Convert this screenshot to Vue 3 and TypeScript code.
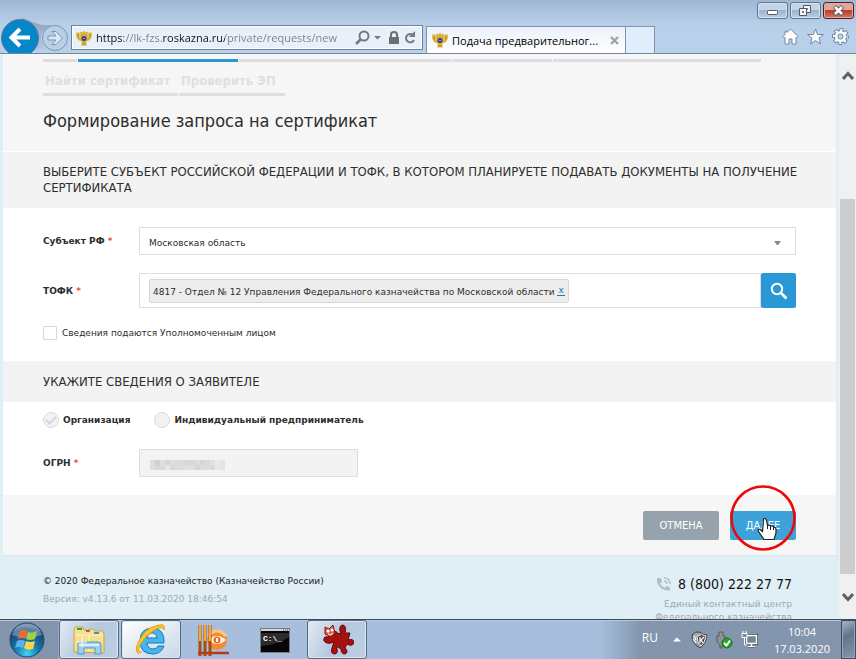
<script setup lang="ts">
import { ref } from 'vue'

interface NavTab { title: string; active?: boolean; width: string }

const primaryTabs: NavTab[] = [
  { title: '', width: 'w-first' },
  { title: 'Сформировать запрос', active: true, width: 'w-active' },
  { title: '', width: 'w-wide' },
  { title: '', width: 'w-short' },
  { title: '', width: 'w-last' },
]
const url = ref('https://lk-fzs.roskazna.ru/private/requests/new')
const region = ref('Московская область')
const authorized = ref(false)
const applicant = ref('org')
const department = ref('4817 - Отдел № 12 Управления Федерального казначейства по Московской области')
const maskShades = [
  ['#dcdcdc', '#d3d0d3', '#dededb', '#d6d4d6', '#dedee2', '#dcdcde', '#dadade', '#d9d7d9', '#d5d9dc', '#dcdcdc', '#d6d4d8', '#d9d9db', '#e2e2e6', '#e9ebea', '#e3e7eb'],
  ['#dddddd', '#d8d5d5', '#dadad7', '#e6e6e2', '#d6d9de', '#dadce0', '#dddce0', '#dfdfe1', '#dfdfdf', '#d7d7db', '#dcdce0', '#dddddf', '#d9dbdb', '#e6e9e6', '#e0e5ea'],
]
</script>

<template>
  <div class="desktop">
    <header class="chrome">
      <div class="nav-buttons">
        <svg width="70" height="54" viewBox="0 0 70 54" aria-hidden="true">
          <defs>
            <linearGradient id="swoosh" x1="0" x2="0" y1="0" y2="1">
              <stop offset="0" stop-color="#8ba1bc" /><stop offset="1" stop-color="#b2c9e3" />
            </linearGradient>
          </defs>
          <path d="M22 18C32 21 37 26 52 25L43 32C40 37 41 42 45 49L33 51Z" fill="url(#swoosh)" />
          <circle cx="20" cy="38" r="18.500" fill="#0487c8" stroke="#5c7791" />
          <path d="M30 37.500H12M20 29L11.500 37.500L20 46" fill="none" stroke="#fff" stroke-width="4" />
          <circle cx="55" cy="38" r="12.500" fill="#b9cfe8" stroke="#8197b1" />
          <path d="M48 36H56L52 31.500H56L62.500 38L56 44.500H52L56 40H48Z" fill="#d9e6f5" stroke="#7e94af" />
        </svg>
      </div>
      <div class="address">
        <svg class="emblem" width="16" height="16" viewBox="0 0 16 16" aria-hidden="true">
          <path d="M0.500 2L3 3L5 1.500L6.500 2.500L8 0.500L9.500 2.500L11 1.500L13 3L15.500 2L16 6L14 10L11 11L10 13L11 15.500H5L6 13L5 11L2 10L0 6Z" fill="#d9b23a" />
          <path d="M2.500 4V8M5 4.500V7M11 4.500V7M13.500 4V8M6 14H10" stroke="#b98d24" />
          <path d="M4 3V8M12 3V8" stroke="#f3dc80" /><circle cx="8" cy="8.500" r="2.500" fill="#353c91" /><path d="M7 8.500H9" stroke="#d98b77" />
        </svg>
        <input v-model="url" class="url" type="text" aria-label="Адрес" spellcheck="false">
        <svg width="64" height="18" viewBox="0 0 64 18" aria-hidden="true">
          <circle cx="10" cy="7" r="4.500" fill="none" stroke="#727981" stroke-width="2" /><path d="M6.500 10.500L2 15" stroke="#727981" stroke-width="2.500" />
          <path d="M20 7H27L23.500 10.500Z" fill="#727981" />
          <path d="M35 8H45V15H35Z" fill="#6d7073" /><path d="M37 8V5.500Q37 3 40 3T43 5.500V8" fill="none" stroke="#6d7073" stroke-width="2" />
          <path d="M59 6A4.200 4.200 0 1 0 60 11" fill="none" stroke="#727981" stroke-width="2" /><path d="M61 2V8H55Z" fill="#727981" />
        </svg>
      </div>
      <div class="tab">
        <svg class="emblem" width="16" height="16" viewBox="0 0 16 16" aria-hidden="true">
          <path d="M0.500 2L3 3L5 1.500L6.500 2.500L8 0.500L9.500 2.500L11 1.500L13 3L15.500 2L16 6L14 10L11 11L10 13L11 15.500H5L6 13L5 11L2 10L0 6Z" fill="#d9b23a" />
          <path d="M2.500 4V8M5 4.500V7M11 4.500V7M13.500 4V8M6 14H10" stroke="#b98d24" />
          <path d="M4 3V8M12 3V8" stroke="#f3dc80" /><circle cx="8" cy="8.500" r="2.500" fill="#353c91" /><path d="M7 8.500H9" stroke="#d98b77" />
        </svg>
        <span class="tab-title">Подача предварительног...</span>
        <button class="plain" type="button" aria-label="Закрыть вкладку">
          <svg width="9" height="9" viewBox="0 0 9 9"><path d="M1 1L8 8M8 1L1 8" stroke="#a3a3a3" stroke-width="2.400" /></svg>
        </button>
      </div>
      <button class="new-tab" type="button" aria-label="Новая вкладка"></button>
      <div class="window-side">
        <div class="window-buttons">
          <button class="win" type="button" aria-label="Свернуть">
            <svg width="29" height="15" viewBox="0 0 29 15"><rect x="9.500" y="7.500" width="10" height="4" rx="1" fill="#fff" stroke="#53586a" /></svg>
          </button>
          <button class="win" type="button" aria-label="Свернуть в окно">
            <svg width="29" height="15" viewBox="0 0 29 15"><path d="M12.500 2.500H19.500V9.500H12.500ZM15.500 5.500V6.500H16.500V5.500Z" fill="#f4f6f9" stroke="#53586a" /><path d="M8.500 5.500H15.500V12.500H8.500ZM11.500 8.500V9.500H12.500V8.500Z" fill="#f4f6f9" stroke="#53586a" /></svg>
          </button>
          <button class="win close" type="button" aria-label="Закрыть">
            <svg width="29" height="15" viewBox="0 0 29 15"><path d="M10.500 3.500L18.500 11.500M18.500 3.500L10.500 11.500" stroke="#555769" stroke-width="4.500" /><path d="M11 4L18 11M18 4L11 11" stroke="#fff" stroke-width="2.500" /></svg>
          </button>
        </div>
        <div class="tools">
          <button class="plain" type="button" aria-label="Домой">
            <svg width="17" height="17" viewBox="0 0 17 17"><path d="M8.500 1L16 8.500L14.500 10L14 9.500V16H10V11H7V16H3V9.500L2.500 10L1 8.500L3 6.500V3H5V4.500Z" fill="#fff" stroke="#7088a3" /></svg>
          </button>
          <button class="plain" type="button" aria-label="Избранное">
            <svg width="17" height="17" viewBox="0 0 17 17"><path d="M8.500 1L10.500 6.500H16.500L12 10L13.500 16L8.500 12.500L3.500 16L5 10L0.500 6.500H6.500Z" fill="#fff" stroke="#7088a3" /></svg>
          </button>
          <button class="plain" type="button" aria-label="Сервис">
            <svg width="17" height="17" viewBox="0 0 17 17"><circle cx="8.500" cy="8.500" r="4.500" fill="none" stroke="#7088a3" stroke-width="4.600" /><circle cx="8.500" cy="8.500" r="6.500" fill="none" stroke="#7088a3" stroke-width="4" stroke-dasharray="3.400 1.705" stroke-dashoffset="1.700" /><circle cx="8.500" cy="8.500" r="6" fill="none" stroke="#fff" stroke-width="3" stroke-dasharray="2 2.712" stroke-dashoffset="1" /><circle cx="8.500" cy="8.500" r="4.300" fill="none" stroke="#fff" stroke-width="2.600" /></svg>
          </button>
        </div>
      </div>
    </header>

    <div class="viewport">
      <div class="page">
        <main class="sheet">
          <nav class="menu">
            <div class="menu-row clipped">
              <a v-for="(item, i) in primaryTabs" :key="i" href="#" :class="['menu-item', item.width, { active: item.active }]">{{ item.title }}</a>
            </div>
            <div class="menu-row second">
              <a class="menu-item find" href="#">Найти сертификат</a>
              <a class="menu-item check" href="#">Проверить ЭП</a>
            </div>
          </nav>
          <h1>Формирование запроса на сертификат</h1>
          <form @submit.prevent>
            <h2>Выберите субъект Российской Федерации и ТОФК, в котором планируете подавать документы на получение сертификата</h2>
            <section class="fields">
              <div class="row">
                <label class="caption" for="region">Субъект РФ <span class="star">*</span></label>
                <div class="select-wrap">
                  <select id="region" v-model="region"><option>Московская область</option></select>
                  <svg class="caret" width="7" height="5" viewBox="0 0 7 5" aria-hidden="true"><path d="M0 0H7L4 4H3Z" fill="#888" /></svg>
                </div>
              </div>
              <div class="row">
                <label class="caption" for="tofk">ТОФК <span class="star">*</span></label>
                <div class="lookup">
                  <div class="lookup-field">
                    <span class="chip">{{ department }} <a class="remove" href="#" aria-label="Удалить">x</a></span>
                    <input id="tofk" class="lookup-input" type="text">
                  </div>
                  <button class="search" type="button" aria-label="Найти">
                    <svg width="18" height="18" viewBox="0 0 18 18"><circle cx="7" cy="7" r="5.200" fill="none" stroke="#fff" stroke-width="2" /><path d="M11 11L16.500 16.500" stroke="#fff" stroke-width="2.600" /></svg>
                  </button>
                </div>
              </div>
              <label class="agree"><input v-model="authorized" type="checkbox"> Сведения подаются Уполномоченным лицом</label>
            </section>
            <h2 class="single">Укажите сведения о заявителе</h2>
            <section class="fields applicant">
              <div class="radios">
                <label><input v-model="applicant" type="radio" name="applicant" value="org" disabled>Организация</label>
                <label><input v-model="applicant" type="radio" name="applicant" value="ip" disabled>Индивидуальный предприниматель</label>
              </div>
              <div class="row">
                <label class="caption" for="ogrn">ОГРН <span class="star">*</span></label>
                <div class="ogrn">
                  <input id="ogrn" type="text" disabled>
                  <svg class="mask" width="75" height="10" viewBox="0 0 75 10" shape-rendering="crispEdges" aria-hidden="true">
                    <g v-for="(line, y) in maskShades" :key="y">
                      <rect v-for="(shade, x) in line" :key="x" :x="x * 5" :y="y * 5" width="5" height="5" :fill="shade" />
                    </g>
                  </svg>
                </div>
              </div>
            </section>
            <div class="actions">
              <button class="action cancel" type="button">Отмена</button>
              <div class="next-wrap">
                <button class="action next" type="submit">Далее</button>
                <svg class="pointer" width="68" height="68" viewBox="0 0 68 68" aria-hidden="true">
                  <circle cx="34" cy="34" r="31.500" fill="none" stroke="#f00707" stroke-width="2.600" />
                  <path d="M34.500 36.500Q34 34.500 35.500 34.500Q37 34.500 37.500 36.500L38.500 41.500Q41 40.500 41.500 42Q44 41.500 44.500 43Q47 43 47 45.500V49L45 55.500H35L29.500 47.500Q28.500 44.500 31 45.500L33.500 47.500Z" fill="#fff" stroke="#222" stroke-width="1.200" />
                  <path d="M38.500 41V45M41.500 42V46M44.500 43V46" stroke="#222" />
                </svg>
              </div>
            </div>
          </form>
        </main>
        <footer class="footer">
          <div class="legal">
            <div>© 2020 Федеральное казначейство (Казначейство России)</div>
            <div class="muted">Версия: v4.13.6 от 11.03.2020 18:46:54</div>
          </div>
          <div class="contact">
            <div class="phone">
              <svg width="14" height="14" viewBox="0 0 14 14" aria-hidden="true"><path d="M0 1H4L5 5L3 6.500Q5 9.500 7.500 11L9 9L13 10V13.500Q6 14 2.500 9.500T0 1Z" fill="#b5bec5" /><path d="M7 1Q13 1 13 7M7 4Q10 4 10 7" fill="none" stroke="#b5bec5" stroke-width="1.500" /></svg>
              8 (800) 222 27 77
            </div>
            <div class="muted centre">Единый контактный центр<br>Федерального казначейства</div>
          </div>
        </footer>
      </div>
      <div class="scrollbar">
        <svg width="12" height="9" viewBox="0 0 12 9" aria-hidden="true"><path d="M1 8L6 2.500L11 8" fill="none" stroke="#606060" stroke-width="3" /></svg>
        <div class="track"><div class="thumb"></div></div>
        <svg width="12" height="9" viewBox="0 0 12 9" aria-hidden="true"><path d="M1 1L6 6.500L11 1" fill="none" stroke="#606060" stroke-width="3" /></svg>
      </div>
    </div>

    <div class="taskbar">
      <button class="start" type="button" aria-label="Пуск">
        <svg width="38" height="38" viewBox="0 0 38 38">
          <defs><radialGradient id="orb" cx=".5" cy=".9" r=".9"><stop offset="0" stop-color="#3ed6f5" /><stop offset=".4" stop-color="#1675ae" /><stop offset=".8" stop-color="#164573" /><stop offset="1" stop-color="#7d9ab6" /></radialGradient></defs>
          <circle cx="19" cy="19" r="17" fill="url(#orb)" stroke="#274765" />
          <path d="M4 14Q7 3 19 3T34 14Q26 17 19 17T4 14Z" fill="#b4cbdc" opacity=".45" />
          <path d="M12 10Q16 7 19 10L17 18Q14 16 10 18Z" fill="#ef6a31" /><path d="M20 11Q24 13 29 10L27 18Q22 20 18 18Z" fill="#a4cf47" />
          <path d="M9 20Q13 18 17 20L15 27Q11 25 7 27Z" fill="#5cb1ed" /><path d="M18 20Q22 22 27 20L25 28Q20 30 16 27Z" fill="#ffd348" />
        </svg>
      </button>
      <button class="task open" type="button" aria-label="Проводник">
        <svg width="34" height="34" viewBox="0 0 34 34">
          <path d="M2 29V7L3 4H11L12 7H16L17 6H21L23 8H31L32 11V30Z" fill="#f6e08e" stroke="#c8a44b" />
          <path d="M5 6H10" stroke="#2ba33b" stroke-width="2" /><path d="M14 8H18" stroke="#d4513b" stroke-width="2" /><path d="M22 10H27" stroke="#3a93d6" stroke-width="2" />
          <path d="M4 12H31M17 10V28" stroke="#fff3bd" />
          <path d="M6 31V21Q6 19 8 19H26Q29 19 29 22V31H23V25H12V31Z" fill="#9bd0ee" stroke="#5798c2" />
          <path d="M7 22H27" stroke="#d9f1fd" stroke-width="2" /><path d="M10 14V24M5 19H15" stroke="#fff" />
        </svg>
      </button>
      <button class="task open lit" type="button" aria-label="Internet Explorer">
        <svg width="34" height="34" viewBox="0 0 34 34">
          <path d="M30 20H13Q14 26 19 26Q23 26 24 23H30Q27 31 19 31Q6 31 6 18T19 5Q31 6 30 20ZM13 15H23Q22 10 18 10T13 15Z" fill="#45b5ec" stroke="#1978bc" />
          <path d="M5 31Q-1 28 6 16T22 3Q32 -1 30 7Q28 2 19 8T6 22Q2 30 8 29" fill="#fac62d" stroke="#e0a217" />
        </svg>
      </button>
      <button class="task" type="button" aria-label="Планировщик">
        <svg width="34" height="34" viewBox="0 0 34 34">
          <circle cx="21" cy="17" r="10" fill="#f58a35" /><path d="M12 13Q21 3 30 13" fill="none" stroke="#ffc588" stroke-width="3" />
          <path d="M12 17Q21 9 30 17Q21 25 12 17Z" fill="#fff2df" /><circle cx="21" cy="17" r="3.500" fill="#f16c1e" /><path d="M21 15V19" stroke="#fff" stroke-width="2" />
          <path d="M4 2V33M9 2V33M14 2V33" stroke="#a84a17" stroke-width="3" /><path d="M4 2V18M9 2V18M14 2V18" stroke="#f5a832" stroke-width="2" /><path d="M2 30H33" stroke="#b63b13" stroke-width="2.500" />
        </svg>
      </button>
      <button class="task" type="button" aria-label="Командная строка">
        <svg width="34" height="34" viewBox="0 0 34 34"><rect x="2.500" y="5.500" width="29" height="24" fill="#050505" stroke="#777c81" /><path d="M3 7H31" stroke="#d0d4d7" stroke-width="2" /><path d="M25 7H30" stroke="#444" stroke-dasharray="1 1" /><path d="M3 23Q20 22 31 14V10H3Z" fill="#2b2b2b" /><text x="5" y="18" class="prompt">C:\_</text></svg>
      </button>
      <button class="task open" type="button" aria-label="Игра">
        <svg width="34" height="34" viewBox="0 0 34 34">
          <path d="M15 9Q16 7 17 10L21 11Q18 4 22 2Q27 2 25 10L30 10L28 17Q34 15 34 20Q32 24 27 21L25 25Q29 29 25 31Q21 31 21 26L16 23Q19 30 15 31Q10 31 12 25L14 19Q7 22 4 18Q3 13 8 14Z" fill="#a51111" stroke="#690707" />
          <path d="M5 4L9 6L13 2L15 10L11 14L5 11Z" fill="#d65a4a" stroke="#8c1b14" /><circle cx="8" cy="8" r="1.500" fill="#fff" /><circle cx="12" cy="7" r="1.500" fill="#fff" /><path d="M8 11Q11 13 13 10" fill="none" stroke="#fff" />
        </svg>
      </button>
      <div class="tray">
        <span class="lang">RU</span>
        <svg class="tray-up" width="8" height="5" viewBox="0 0 8 5" aria-hidden="true"><path d="M0 4.500L4 0.500L8 4.500Z" fill="#fff" /></svg>
        <svg width="17" height="18" viewBox="0 0 17 18" aria-hidden="true"><path d="M8 1Q4 0 1 4Q0 10 5 14L9 17Q15 13 16 4Q12 4 10 2Z" fill="#a4a6a7" stroke="#3a4046" /><path d="M6 5Q9 5 10.500 3Q12 5 15 5Q14 12 10 15Q6 12 6 5Z" fill="#4d5154" stroke="#e9e9e9" /><path d="M9 6V12M13 6L10 9L12 12M3 5L5 9M2 8L5 12" fill="none" stroke="#fff" stroke-width="1.200" /></svg>
        <svg width="17" height="18" viewBox="0 0 17 18" aria-hidden="true"><path d="M3 1H7V5H9V11L6 14V17H4V14L1 11V5H3Z" fill="#8f9193" stroke="#585d62" /><circle cx="11" cy="12" r="5" fill="#25a52b" stroke="#147219" /><path d="M8 12L10.500 14.500L14 9.500" fill="none" stroke="#fff" stroke-width="2" /></svg>
        <svg width="17" height="18" viewBox="0 0 17 18" aria-hidden="true"><path d="M5.500 4.500H15.500V12.500H5.500ZM7 15.500H14M10.500 13V15" fill="#74859a" stroke="#39434f" stroke-width="3" /><path d="M5.500 4.500H15.500V12.500H5.500ZM7 15.500H14M10.500 13V15" fill="#74859a" stroke="#fff" stroke-width="1.500" /><path d="M1 2.500H6V6.500H1ZM2 0V3M5 0V3M3.500 7V14H6" fill="#75879d" stroke="#fff" /></svg>
        <time class="clock">10:04<br>17.03.2020</time>
        <button class="show-desktop" type="button" aria-label="Показать рабочий стол"></button>
      </div>
    </div>
  </div>
</template>

<style>
body { margin: 0; }
</style>

<style scoped>
* { box-sizing: border-box; }
.desktop {
  display: flex; flex-direction: column; height: 100vh; overflow: hidden;
  font-family: "DejaVu Sans", sans-serif; font-size: 9px; color: #2d2d2d;
}
button, input, select { font: inherit; color: inherit; margin: 0; }
button { padding: 0; }
svg { display: block; flex: none; }
a { text-decoration: none; color: inherit; }
.plain { border: 0; background: none; }

.chrome {
  display: flex; align-items: flex-end; height: 54px; flex: none;
  background: linear-gradient(#9fb8d2, #b9d0ea 26px, #b9d0ea);
  border-bottom: 1px solid #71869f; overflow: hidden;
  font-family: "Open Sans", sans-serif; font-size: 11px; color: #000;
}
.nav-buttons { align-self: flex-start; width: 71px; flex: none; }
.address {
  display: flex; align-items: center; flex: 0 1 352px; height: 25px; margin-bottom: 3px; padding: 0 4px;
  border: 1px solid #6f8299; background: #e9f0fa; box-shadow: inset 0 0 0 1px #fff;
}
.url {
  flex: 1; min-width: 0; height: 20px; padding: 0; margin-left: 4px; border: 0; outline: 0; color: transparent;
  background: linear-gradient(90deg, #111 28px, #7b8086 28px, #7b8086 67px, #111 67px, #111 129px, #7b8086 129px);
  background-clip: text; -webkit-background-clip: text;
}
.tab {
  display: flex; align-items: center; flex: 0 1 200px; height: 27px; margin-left: 3px; padding: 0 6px 0 5px;
  border: 1px solid #7e93ac; border-bottom: 0; background: linear-gradient(#ebf2fa, #fff);
}
.tab-title { flex: 1; margin-left: 4px; white-space: nowrap; }
.new-tab { width: 29px; height: 27px; border: 1px solid #7e93ac; border-width: 1px 1px 0 0; background: #e0edfa; }
.window-side { display: flex; flex-direction: column; align-items: flex-end; gap: 9px; margin-left: auto; align-self: flex-start; padding: 2px 2px 0 0; }
.window-buttons { display: flex; gap: 2px; }
.win { width: 31px; height: 17px; border: 1px solid #60748d; border-radius: 3px; background: linear-gradient(#c3d4e7 45%, #9db4cf 50%, #b9cee5); box-shadow: inset 0 0 0 1px #d5e2f0; }
.close { border-color: #531b28; background: linear-gradient(#e3a598 45%, #b93c25 50%, #d57862); box-shadow: inset 0 0 0 1px #e5aa9f; }
.tools { display: flex; gap: 8px; padding-right: 5px; }

.viewport { display: flex; flex: 1; min-height: 0; overflow: hidden; background: #e0eef5; }
.page { flex: 1; min-width: 0; padding: 0 3px; overflow: hidden; }
.sheet { background: #f6f6f6; border-bottom: 1px solid #d7e9f1; }
.menu, h1, h2, .action, .phone { font-family: "DejaVu Sans Condensed", "DejaVu Sans", sans-serif; font-stretch: condensed; }
.menu { padding: 0 40px; font-size: 13px; font-weight: bold; line-height: 16px; color: #dfdfdf; }
.menu-row { display: flex; gap: 1px; }
.clipped { height: 8px; align-items: flex-end; overflow: hidden; }
.menu-item { flex: none; border-bottom: 3px solid #dedede; padding: 0 2px 4px; white-space: nowrap; }
.active { color: #2d2d2d; border-color: #2a98d6; }
.w-first { width: 34px; }
.w-active { width: 160px; }
.w-wide { width: 213px; }
.w-short { width: 99px; }
.w-last { width: 208px; }
.second { margin-top: 11px; }
.find { width: 135px; }
.check { width: 106px; }
h1, h2 { margin: 0; font-weight: normal; }
h1 { padding: 14px 40px 19px; font-size: 18px; line-height: 22px; border-bottom: 1px solid #fff; }
h2 { padding: 12px 28px 12px 40px; font-size: 13px; line-height: 16px; background: #f3f3f3; text-transform: uppercase; }
.single { padding-top: 13px; }
.fields { padding: 19px 40px 21px; background: #fff; }
.row { display: flex; align-items: center; margin-bottom: 18px; }
.caption { width: 96px; flex: none; font-weight: bold; }
.star { color: #f4503c; }
.select-wrap { position: relative; flex: 1; }
select {
  display: block; width: 100%; height: 28px; padding: 4px 9px 0; border: 1px solid #dedede; border-radius: 0;
  background: #fff; appearance: none;
}
.caret { position: absolute; right: 15px; top: 14px; }
.lookup { display: flex; flex: 1; min-width: 0; }
.lookup-field { display: flex; align-items: center; flex: 1; min-width: 0; height: 35px; padding-left: 9px; border: 1px solid #dedede; }
.chip { flex: none; height: 24px; padding: 0 3px; line-height: 24px; border: 1px solid #d6d6d6; border-radius: 2px; background: #ededed; white-space: nowrap; }
.remove { display: inline-block; line-height: 9px; padding: 0 1px; vertical-align: 2px; color: #2377b5; border-bottom: 1px solid #2377b5; }
.lookup-input { flex: 1; min-width: 0; height: 24px; border: 0; outline: 0; background: none; }
.search { display: grid; place-items: center; width: 35px; height: 35px; border: 0; border-radius: 2px; background: #2a98d6; }
.agree { display: flex; align-items: center; gap: 5px; width: max-content; height: 14px; }
.agree input { appearance: none; width: 14px; height: 14px; border: 1px solid #d6d6d6; border-radius: 1px; background: #fff; }
.applicant { padding: 10px 40px 18px; }
.applicant .row { margin-bottom: 0; }
.radios { display: flex; gap: 24px; margin-bottom: 21px; font-weight: bold; }
.radios label { display: flex; align-items: center; gap: 4px; height: 16px; }
.radios input { appearance: none; width: 16px; height: 16px; border: 1px solid #dcdcdc; border-radius: 50%; background: #f2f2f2; }
.radios input:checked { display: grid; place-items: center; }
.radios input:checked::before { content: ""; width: 8px; height: 4px; border: solid #d6d6d6; border-width: 0 0 2px 2px; transform: translateY(-1px) rotate(-45deg); }
.ogrn { position: relative; }
.ogrn input { display: block; width: 219px; height: 28px; border: 1px solid #dedede; background: #f3f3f3; }
.mask { position: absolute; left: 11px; top: 11px; }
.actions { display: flex; justify-content: flex-end; gap: 11px; padding: 16px 40px 15px; background: #f6f6f6; }
.action { height: 29px; border: 0; border-radius: 2px; font-size: 11px; color: #fff; text-transform: uppercase; }
.cancel { width: 76px; background: #96a3ad; }
.next { width: 66px; background: #3da2da; }
.next-wrap { position: relative; }
.pointer { position: absolute; left: -1px; top: -27px; pointer-events: none; }
.footer { display: flex; justify-content: space-between; padding: 16px 40px 0; }
.legal { line-height: 19px; }
.legal div:first-child { color: #222; line-height: 18px; }
.muted { color: #a3a7aa; }
.contact { display: flex; flex-direction: column; align-items: flex-end; padding-right: 4px; }
.phone { display: flex; align-items: center; gap: 7px; height: 24px; font-size: 14px; color: #111; white-space: nowrap; }
.centre { text-align: right; line-height: 13px; padding-top: 2px; }
.scrollbar { display: flex; flex-direction: column; align-items: center; width: 17px; flex: none; padding: 17px 0; background: #f0f0f0; }
.track { display: flex; flex-direction: column; justify-content: flex-end; align-self: stretch; flex: 1; padding: 0 1px 19px; }
.thumb { height: 76%; background: #cdcdcd; }

.taskbar {
  display: flex; align-items: stretch; height: 40px; flex: none; border-top: 1px solid #3b4a5d;
  background: linear-gradient(90deg, #8295ac 58px, #a7bfdd 59px, #a7bfdd calc(100% - 256px), #8496ae calc(100% - 216px), #8295ac);
  box-shadow: inset 0 1px #b9c9dc;
}
.start { width: 58px; border: 0; background: none; padding-left: 8px; }
.task { display: grid; place-items: center; width: 60px; margin-right: 2px; border: 1px solid transparent; border-radius: 3px; background: none; }
.start + .task { margin-left: 1px; }
.open { border-color: #586c85; background: linear-gradient(120deg, #e5ebf3, #b4c8df 50%, #bdcfe3); box-shadow: inset 0 0 0 1px #dce6f1; }
.lit { background: linear-gradient(150deg, #fff, #dde6ef 60%, #c6d7e9); }
.prompt { font-family: "Liberation Mono", monospace; font-size: 8px; font-weight: bold; fill: #fff; }
.tray { display: flex; align-items: center; gap: 8px; margin-left: auto; font-family: "Open Sans", sans-serif; font-size: 12px; color: #fff; }
.lang { margin-right: 7px; padding-bottom: 4px; }
.tray-up { margin-right: 2px; }
.clock { margin-left: 8px; font-size: 11px; line-height: 17px; text-align: center; }
.show-desktop { align-self: stretch; width: 15px; margin-left: 3px; border: 1px solid #3e4d60; background: linear-gradient(150deg, #a9b7c7, #63758b 40%, #8597ac); box-shadow: inset 0 0 0 1px #93a4b8; }
</style>
